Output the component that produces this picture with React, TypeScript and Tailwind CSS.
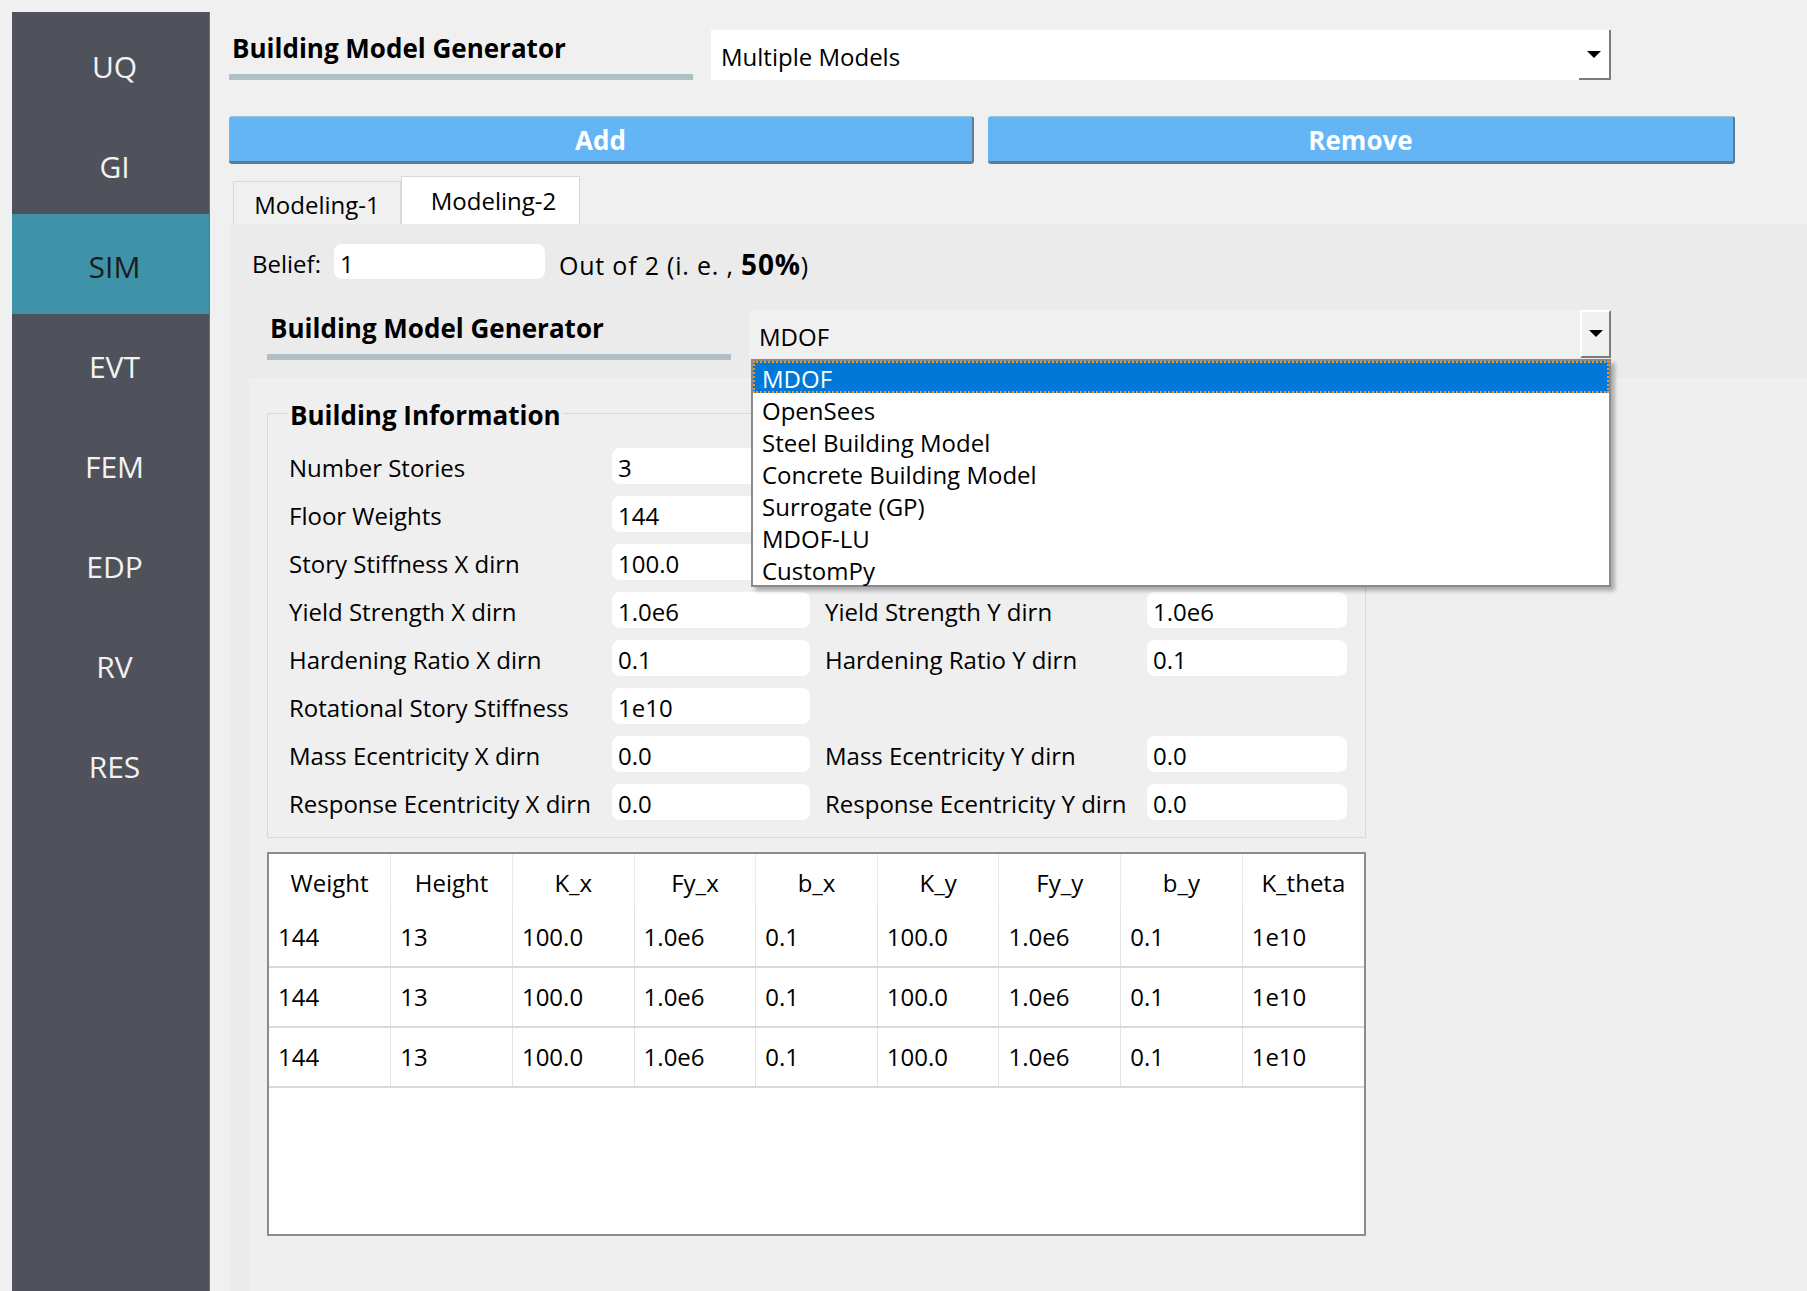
import React from "react";

const navItems = ["UQ", "GI", "SIM", "EVT", "FEM", "EDP", "RV", "RES"];

const modelOptions = [
  "MDOF",
  "OpenSees",
  "Steel Building Model",
  "Concrete Building Model",
  "Surrogate (GP)",
  "MDOF-LU",
  "CustomPy",
];

// [left label, left value, right label, right value]
// the right half of the first rows sits under the open dropdown
const fields: Array<[string, string, string?, string?]> = [
  ["Number Stories", "3"],
  ["Floor Weights", "144"],
  ["Story Stiffness X dirn", "100.0"],
  ["Yield Strength X dirn", "1.0e6", "Yield Strength Y dirn", "1.0e6"],
  ["Hardening Ratio X dirn", "0.1", "Hardening Ratio Y dirn", "0.1"],
  ["Rotational Story Stiffness", "1e10"],
  ["Mass Ecentricity X dirn", "0.0", "Mass Ecentricity Y dirn", "0.0"],
  ["Response Ecentricity X dirn", "0.0", "Response Ecentricity Y dirn", "0.0"],
];

const columns = ["Weight", "Height", "K_x", "Fy_x", "b_x", "K_y", "Fy_y", "b_y", "K_theta"];
const rows = [
  ["144", "13", "100.0", "1.0e6", "0.1", "100.0", "1.0e6", "0.1", "1e10"],
  ["144", "13", "100.0", "1.0e6", "0.1", "100.0", "1.0e6", "0.1", "1e10"],
  ["144", "13", "100.0", "1.0e6", "0.1", "100.0", "1.0e6", "0.1", "1e10"],
];

function Arrow() {
  return (
    <svg width="14" height="8" viewBox="0 0 14 8">
      <polygon points="0,0 14,0 7,7" fill="#000" />
    </svg>
  );
}

function SectionTitle({ text }: { text: string }) {
  return (
    <div className="w-[464px] h-[50px] flex flex-col justify-between">
      <div className="pl-[3px] pt-[2px] font-bold text-[26px] leading-[33px]">{text}</div>
      <div className="h-[6px] bg-[#b0bec5]" />
    </div>
  );
}

function Field({ value }: { value: string }) {
  return (
    <div className="h-[36px] bg-white rounded-[8px] flex items-center pl-[6px] pt-[3px] text-[24px] leading-none">
      {value}
    </div>
  );
}

export default function App() {
  return (
    <div className="w-[1807px] h-[1291px] bg-[#f0f0f0] flex font-['Open_Sans',sans-serif] text-black overflow-hidden">
      {/* side navigation */}
      <div className="ml-[12px] mt-[12px] w-[198px] bg-[#4f525a] border-r border-[#6c6f76] pt-[2px] flex flex-col">
        {navItems.map((item) => (
          <div
            key={item}
            className={
              item === "SIM"
                ? "h-[100px] flex items-center justify-center pl-[8px] pt-[4px] text-[30px] bg-[#3f93a8] text-[#1c1c1c]"
                : "h-[100px] flex items-center justify-center pl-[8px] pt-[4px] text-[30px] text-[#f2f2f2]"
            }
          >
            {item}
          </div>
        ))}
      </div>

      <div className="flex-1 flex flex-col pt-[30px]">
        {/* top generator row */}
        <div className="pl-[19px] flex gap-[18px]">
          <SectionTitle text="Building Model Generator" />
          <div className="w-[900px] h-[50px] bg-white flex items-center relative">
            <span className="pl-[10px] pt-[4px] text-[24px]">Multiple Models</span>
            <div className="ml-auto w-[32px] h-full flex items-center justify-center">
              <div className="w-full h-full flex items-center justify-center border-r-2 border-[#7c7c7c]">
                <Arrow />
              </div>
            </div>
            <div className="absolute right-0 bottom-0 w-[32px] h-[2px] bg-[#7c7c7c]" />
          </div>
        </div>

        {/* add / remove */}
        <div className="mt-[36px] pl-[19px] flex gap-[14px]">
          <button className="w-[745px] h-[48px] pt-[3px] bg-[#64b5f6] rounded-[3px] border-t border-[#9cc3d8] border-b-[3px] border-b-[#5b7d93] border-r-2 border-r-[#5b7d93] text-white font-bold text-[26px]">
            Add
          </button>
          <button className="w-[747px] h-[48px] pt-[3px] bg-[#64b5f6] rounded-[3px] border-t border-[#9cc3d8] border-b-[3px] border-b-[#5b7d93] border-r-2 border-r-[#5b7d93] text-white font-bold text-[26px]">
            Remove
          </button>
        </div>

        {/* tabs */}
        <div className="mt-[12px] pl-[23px] flex items-end">
          <div className="w-[168px] h-[43px] pt-[3px] bg-[#f0f0f0] border border-b-0 border-[#d9d9d9] flex items-center justify-center text-[24px]">
            Modeling-1
          </div>
          <div className="w-[179px] h-[48px] pl-[6px] bg-white border border-b-0 border-[#d9d9d9] flex items-center justify-center text-[24px]">
            Modeling-2
          </div>
        </div>

        {/* tab pane */}
        <div className="ml-[20px] flex-1 bg-[#ebebeb] flex flex-col">
          <div className="mt-[20px] pl-[22px] h-[35px] flex items-center text-[24px]">
            <span className="pt-[4px]">Belief:</span>
            <div className="ml-[13px] w-[211px] h-[35px] bg-white rounded-[8px] flex items-center pl-[6px] pt-[4px]">1</div>
            <span className="ml-[14px] pt-[4px] text-[25px] tracking-[0.8px]">
              Out of 2 (i. e. , <b className="text-[28px]">50%</b>)
            </span>
          </div>

          <div className="mt-[31px] pl-[37px] flex gap-[18px]">
            <SectionTitle text="Building Model Generator" />
            <div className="w-[862px] h-[48px] bg-[#f0f0f0] flex items-center relative">
              <span className="pl-[10px] pt-[5px] text-[24px]">MDOF</span>
              <div className="ml-auto w-[31px] h-[48px] border-l-2 border-t-2 border-white border-r-2 border-r-[#7c7c7c] border-b-2 border-b-[#7c7c7c] flex items-center justify-center">
                <Arrow />
              </div>

              {/* open dropdown list */}
              <div className="absolute left-[2px] top-[49px] w-[860px] bg-white border-2 border-[#8a8a8a] shadow-[4px_4px_4px_rgba(0,0,0,0.28)] z-10 text-[24px]">
                {modelOptions.map((opt, i) => (
                  <div
                    key={opt}
                    className={
                      i === 0
                        ? "h-[32px] flex items-center pl-[7px] pt-[3px] bg-[#0078d7] text-white border-2 border-dotted border-[#f7941d]"
                        : "h-[32px] flex items-center pl-[9px] pt-[3px]"
                    }
                  >
                    {opt}
                  </div>
                ))}
              </div>
            </div>
          </div>

          <div className="mt-[18px] ml-[19px] flex-1 bg-[#efefef] pl-[18px] pt-[35px]">
            {/* Building Information group */}
            <div className="relative w-[1099px] h-[425px] border border-[#d8d8d8] pl-[21px] pt-[34px]">
              <div className="absolute -top-[17px] left-[20px] px-[2px] pt-[2px] bg-[#efefef] font-bold text-[26px] leading-[33px]">
                Building Information
              </div>
              <div className="grid grid-cols-[308px_198px_307px_200px] gap-x-[15px] gap-y-[12px] text-[24px]">
                {fields.map(([l1, v1, l2, v2]) => (
                  <React.Fragment key={l1}>
                    <div className="h-[36px] pt-[3px] flex items-center whitespace-nowrap">{l1}</div>
                    <Field value={v1} />
                    <div className="h-[36px] pt-[3px] flex items-center whitespace-nowrap">{l2 ?? ""}</div>
                    {v2 ? <Field value={v2} /> : <div />}
                  </React.Fragment>
                ))}
              </div>
            </div>

            {/* floor table */}
            <div className="mt-[14px] w-[1099px] h-[384px] bg-white border-2 border-[#8b8b8f]">
              <table className="table-fixed border-collapse text-[24px]">
                <thead>
                  <tr className="h-[53px]">
                    {columns.map((c, i) => (
                      <th
                        key={c}
                        className={
                          i === 0
                            ? "w-[122px] pt-[5px] font-normal text-center"
                            : "w-[122px] pt-[5px] font-normal text-center border-l border-[#ebebeb]"
                        }
                      >
                        {c}
                      </th>
                    ))}
                  </tr>
                </thead>
                <tbody>
                  {rows.map((r, ri) => (
                    <tr key={ri} className="h-[60px] border-b-2 border-[#dadada]">
                      {r.map((v, ci) => (
                        <td
                          key={ci}
                          className={ci === 0 ? "pl-[9px]" : "pl-[9px] border-l border-[#e3e3e3]"}
                        >
                          {v}
                        </td>
                      ))}
                    </tr>
                  ))}
                </tbody>
              </table>
            </div>
          </div>
        </div>
      </div>
    </div>
  );
}
